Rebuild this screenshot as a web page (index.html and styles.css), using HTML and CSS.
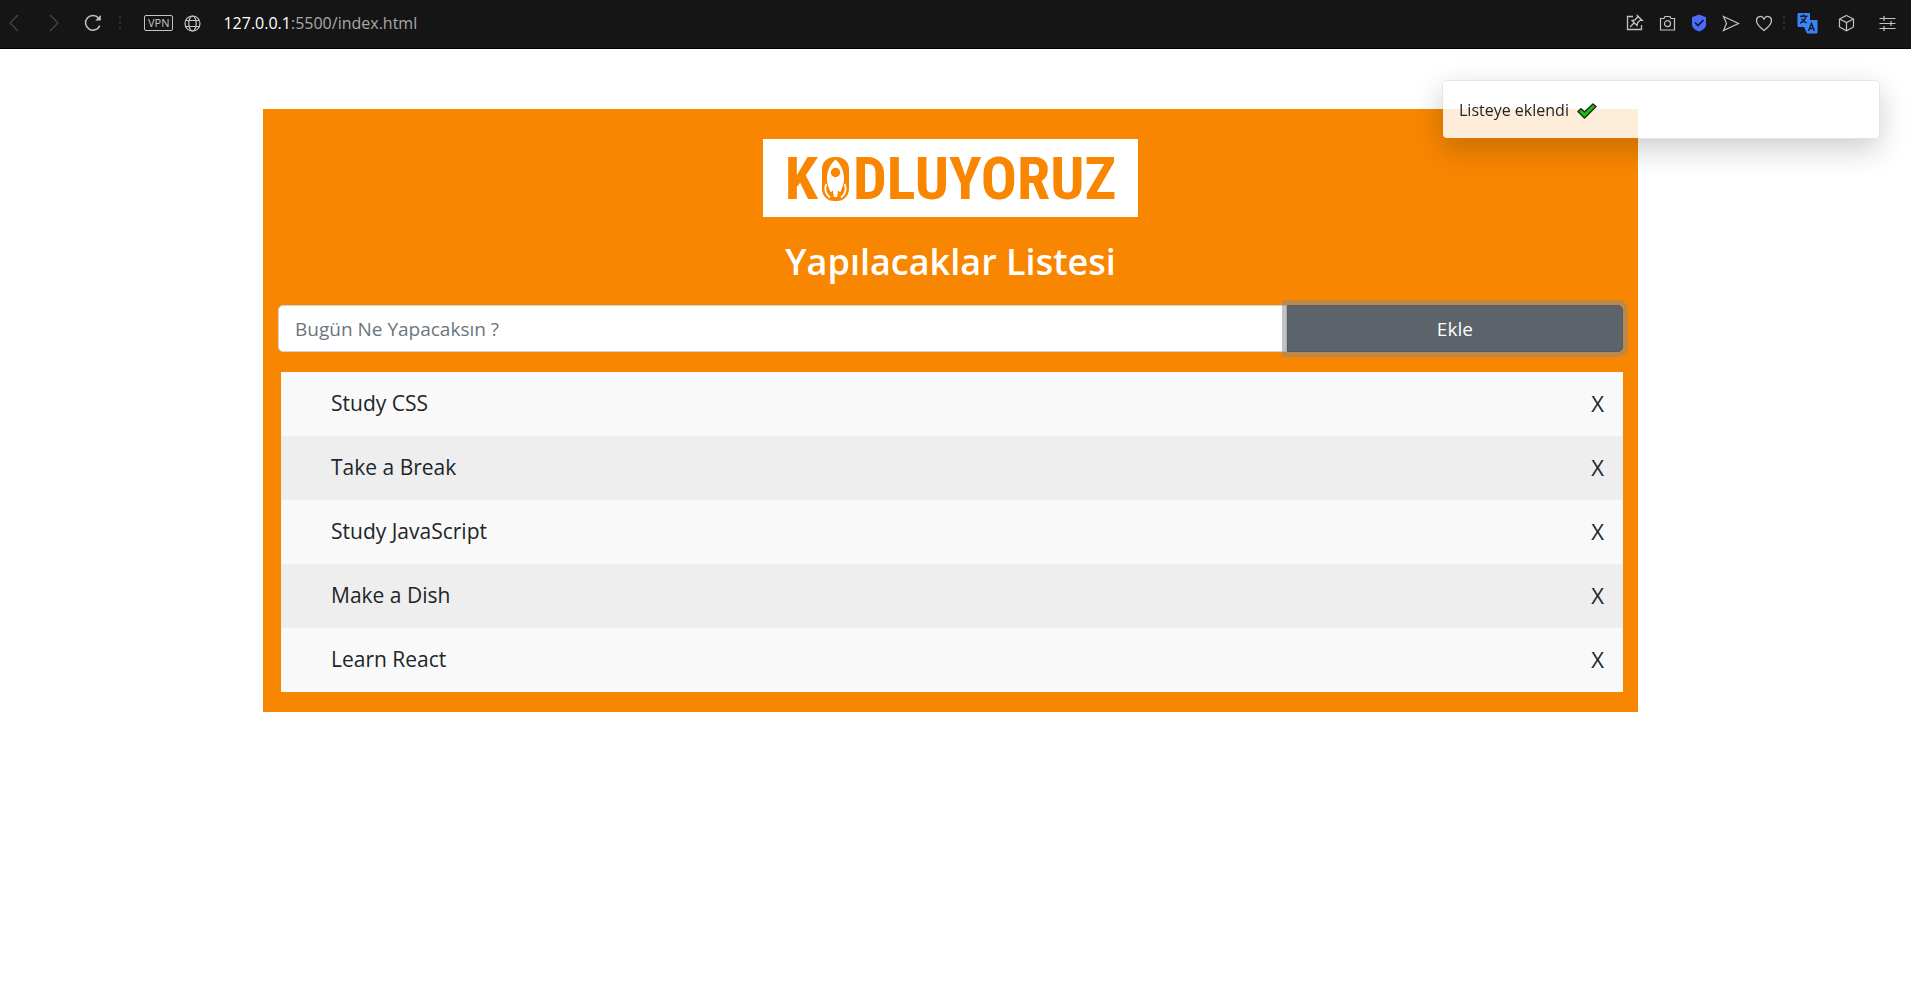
FILE: index.html
```html
<!DOCTYPE html>
<html lang="tr">
<head>
<meta charset="utf-8">
<meta name="viewport" content="width=device-width, initial-scale=1">
<title>Yapılacaklar Listesi</title>
<link rel="stylesheet" href="styles.css">
</head>
<body>
<header class="toolbar">
  <nav class="toolbar-nav" aria-label="Gezinme">
    <button class="icon-button dim" aria-label="Geri"><svg width="10" height="18" viewBox="0 0 10 18"><path d="M9 1 1 9l8 8"/></svg></button>
    <button class="icon-button dim forward" aria-label="İleri"><svg width="10" height="18" viewBox="0 0 10 18"><path d="m1 1 8 8-8 8"/></svg></button>
    <button class="icon-button reload" aria-label="Yenile"><svg width="18" height="18" viewBox="0 0 18 18"><path d="M15.8 11.6A7.4 7.4 0 1 1 14.6 4" stroke-width="1.5"/><path d="M16.8 1v5.6h-5.6z" fill="currentColor" stroke="none"/></svg></button>
    <span class="dots"></span>
    <span class="vpn">VPN</span>
    <button class="icon-button" aria-label="Site bilgisi"><svg width="17" height="17" viewBox="0 0 17 17"><circle cx="8.500" cy="8.500" r="7.500"/><ellipse cx="8.500" cy="8.500" rx="3.700" ry="7.500"/><path d="M2 5.500h13M2 11.500h13"/></svg></button>
    <div class="url"><span class="host">127.0.0.1</span>:5500/index.html</div>
  </nav>
  <div class="toolbar-actions">
    <button class="icon-button" aria-label="Sabitle"><svg width="18" height="18" viewBox="0 0 18 18"><path d="M7 2.500H1.500v13h14V11M4 13l4-4M6 6.500l5 5 .8-3 2.700-2.500 1.500.3-4.600-4.600.2 1.500L9 5.800z" stroke-width="1.300"/></svg></button>
    <button class="icon-button" aria-label="Ekran görüntüsü"><svg width="17" height="17" viewBox="0 0 17 17"><path d="M1.500 3.500H5l1-2h5l1 2h3.500v11.500h-14z"/><circle cx="8.500" cy="8.700" r="3"/></svg></button>
    <button class="icon-button" aria-label="Reklam engelleyici"><svg width="16" height="18" viewBox="0 0 16 18"><path d="m8 .5 7 2.800v7.200c0 3.500-3 5.500-7 7-4-1.500-7-3.500-7-7V3.300z" fill="#4b6bff" stroke="none"/><path d="m4 8.500 3 3L12.500 6" stroke="#151515" stroke-width="1.600"/></svg></button>
    <button class="icon-button" aria-label="Gönder"><svg width="18" height="17" viewBox="0 0 18 17"><path d="M1.500 1.500 16.500 8.500l-15 7 3-7z"/></svg></button>
    <button class="icon-button" aria-label="Favori"><svg width="18" height="17" viewBox="0 0 18 17"><path d="M9 15.500C5 12.500 1.500 9.500 1.500 5.500c0-4.500 5.500-5.500 7.500-1.500 2-4 7.500-3 7.500 1.500 0 4-3.500 7-7.500 10z" stroke-width="1.300"/></svg></button>
    <span class="dots"></span>
    <button class="icon-button translate" aria-label="Çevir"><svg width="21" height="21" viewBox="0 0 21 21"><path d="M1.500 0H12q1 0 1 1v6h6.500q1 0 1 1v11.500q0 1-1 1H10L7 14H1.500q-1 0-1-1V1q0-1 1-1z" fill="#3b82f6" stroke="none"/><path d="M3 3.300h7.500M6.500 1.300v2M9 3.500C8 7 6 9 3 10M4.500 5.500c1 2 3 3.500 5 4.500M4 14c0 3 2 4.500 4 4.500M11.500 18l3-7.500 3 7.500M12.500 15.500h4" stroke="#151b2a" stroke-width="1.400"/></svg></button>
    <button class="icon-button cube" aria-label="Uzantılar"><svg width="17" height="18" viewBox="0 0 17 18"><path d="m8.500 1.500 7 3.500v8l-7 3.700-7-3.700V5zM1.500 5l7 3.500 7-3.500M8.500 8.500v8"/></svg></button>
    <button class="icon-button sliders" aria-label="Ayarlar"><svg width="17" height="17" viewBox="0 0 17 17"><path d="M.5 3.500h16M.5 8.500h16M.5 13.500h16M5 1v5M12 6v5M5 11v5"/></svg></button>
  </div>
</header>

<main class="page">
  <section class="todo">
    <div class="logo" role="img" aria-label="Kodluyoruz">
      <span>K</span>
      <svg class="rocket" width="27" height="44" viewBox="0 0 27 44"><rect x="0" y="0" width="27" height="44" rx="12" fill="#f88600"/><path d="M13.500 2.500C7 8.500 5 15 5 22c0 5 2 9 3.500 13h2.300l1 5h3.400l1-5h2.300C20 31 22 27 22 22c0-7-2-13.500-8.500-19.500z" fill="#fff"/><circle cx="13.500" cy="15.500" r="4.700" fill="#f88600"/><path d="M4.500 27C2.500 31 3 36 8 40.500M22.500 27c2 4 1.500 9-3.500 13.500" fill="none" stroke="#fff" stroke-width="1.800"/><path d="M10.500 34v5.500M16.500 34v5.500" stroke="#f88600" stroke-width="1.500"/></svg>
      <span>DLUYORUZ</span>
    </div>
    <h1 class="title">Yapılacaklar Listesi</h1>
    <form class="entry">
      <input class="entry-input" type="text" placeholder="Bugün Ne Yapacaksın ?" aria-label="Bugün Ne Yapacaksın ?">
      <button class="entry-button" type="button">Ekle</button>
    </form>
    <ul class="list">
      <li class="item"><span>Study CSS</span><button class="remove" aria-label="Sil">X</button></li>
      <li class="item"><span>Take a Break</span><button class="remove" aria-label="Sil">X</button></li>
      <li class="item"><span>Study JavaScript</span><button class="remove" aria-label="Sil">X</button></li>
      <li class="item"><span>Make a Dish</span><button class="remove" aria-label="Sil">X</button></li>
      <li class="item"><span>Learn React</span><button class="remove" aria-label="Sil">X</button></li>
    </ul>
  </section>
</main>

<div class="toast" role="status">
  <span>Listeye eklendi</span>
  <svg width="20" height="16" viewBox="0 0 20 16"><path d="m1 8.500 3-2.800L7.500 9 16 1l3 2.500L7.500 15z" fill="#16c60c" stroke="#1c2b1c" stroke-width="1.500" stroke-linejoin="round"/></svg>
</div>
</body>
</html>
```
FILE: styles.css
```css
* { box-sizing: border-box; }

body {
  margin: 0;
  background: #fff;
  color: #212529;
  font-family: "Segoe UI", "Open Sans", "Noto Sans", sans-serif;
}

button { font-family: inherit; cursor: pointer; }

.toolbar {
  display: flex;
  justify-content: space-between;
  align-items: center;
  height: 49px;
  padding: 0 15px 2px 9px;
  background: #151515;
  border-bottom: 1px solid #000;
}

.toolbar-nav, .toolbar-actions { display: flex; align-items: center; }
.toolbar-actions { gap: 15px; }

.icon-button {
  display: flex;
  padding: 0;
  border: 0;
  background: none;
  color: #c4c4c4;
}
.icon-button svg { fill: none; stroke: currentColor; stroke-width: 1.2; }
.icon-button.dim { color: #484848; }
.forward { margin-left: 30px; }
.reload { margin-left: 25px; }

.dots {
  width: 2px;
  height: 14px;
  background: repeating-linear-gradient(#2c2c2c 0 3px, transparent 3px 5px);
}
.toolbar-nav .dots { margin: 0 23px 0 17px; }
.toolbar-actions .dots { margin: 0 -3px 0 -5px; }
.cube { margin-left: 5px; }
.sliders { margin-left: 9px; }

.vpn {
  margin-right: 11px;
  padding: 0 3px;
  border: 1px solid #c4c4c4;
  border-radius: 2px;
  color: #c4c4c4;
  font: 11px/14px "Open Sans", sans-serif;
}

.url { margin-left: 22px; color: #a8a8a8; font-size: 16px; line-height: 24px; }
.host { color: #fff; }

.page { padding: 60px 10px 60px 0; }

.todo {
  display: flex;
  flex-direction: column;
  width: 100%;
  max-width: 1375px;
  margin: 0 auto;
  padding: 30px 15px 20px;
  background: #f88600;
}

.logo {
  display: flex;
  justify-content: center;
  align-items: center;
  align-self: center;
  gap: 4px;
  width: 375px;
  max-width: 100%;
  height: 78px;
  padding-top: 2px;
  background: #fff;
  color: #f88600;
  font: 700 60px/76px "Roboto Condensed", "Liberation Sans Narrow", "Lato", sans-serif;
}

.title {
  margin: 19px 0 17px;
  color: #fff;
  font-size: 36px;
  font-weight: 600;
  line-height: 52px;
  text-align: center;
}

.entry { display: flex; }

.entry-input {
  flex: 0 0 75%;
  min-width: 0;
  height: 47px;
  padding: 0 16px;
  border: 1px solid #ced4da;
  border-radius: 5px 0 0 5px;
  background: #fff;
  color: #495057;
  font-family: inherit;
  font-size: 19px;
}
.entry-input::placeholder { color: #6c757d; opacity: 1; }

.entry-button {
  flex: 1;
  height: 47px;
  border: 1px solid #545b62;
  border-radius: 0 5px 5px 0;
  background: #5c636a;
  box-shadow: 0 0 0 5px rgba(130, 138, 145, .5);
  color: #fff;
  font-size: 19px;
}

.list { margin: 20px 0 0 3px; padding: 0; list-style: none; }

.item {
  display: flex;
  justify-content: space-between;
  align-items: center;
  height: 64px;
  padding: 0 19px 2px 50px;
  background: #f9f9f9;
  font-size: 21px;
  line-height: 32px;
}
.item:nth-child(even) { background: #eee; }

.remove {
  padding: 0;
  border: 0;
  background: none;
  color: inherit;
  font-size: 22px;
  line-height: 32px;
}

.toast {
  position: fixed;
  top: 80px;
  right: 31px;
  display: flex;
  align-items: center;
  gap: 8px;
  width: 438px;
  padding: 18px 16px 16px;
  border: 1px solid rgba(0, 0, 0, .1);
  border-radius: 5px;
  background: rgba(255, 255, 255, .85);
  background-clip: padding-box;
  box-shadow: 0 10px 30px rgba(0, 0, 0, .2);
  font-size: 16px;
  line-height: 23px;
}
```
